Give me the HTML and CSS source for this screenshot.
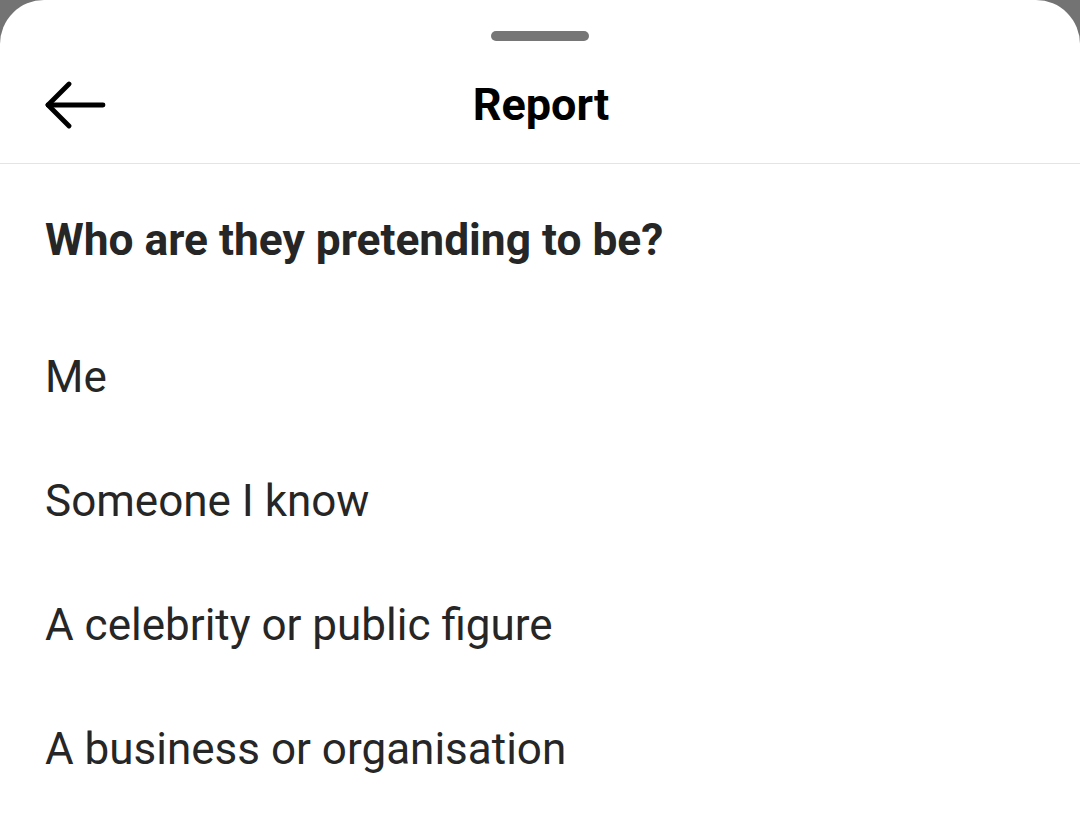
FILE: index.html
```html
<!DOCTYPE html>
<html lang="en">
<head>
<meta charset="utf-8">
<title>Report</title>
<link rel="stylesheet" href="styles.css">
</head>
<body>
<div class="sheet">
  <div class="handle"></div>
  <div class="header">
    <button class="back" aria-label="Back">
      <svg width="64" height="48" viewBox="0 0 64 48" fill="none" stroke="#000" stroke-width="4.8" stroke-linecap="round" stroke-linejoin="round">
        <path d="M4 24 H59"/>
        <path d="M25 3 L4 24 L25 45"/>
      </svg>
    </button>
    <h1 class="title">Report</h1>
  </div>
  <h2 class="question">Who are they pretending to be?</h2>
  <ul class="options">
    <li class="option">Me</li>
    <li class="option">Someone I know</li>
    <li class="option">A celebrity or public figure</li>
    <li class="option">A business or organisation</li>
  </ul>
</div>
</body>
</html>
```
FILE: styles.css
```css
html, body {
  margin: 0;
  padding: 0;
}
body {
  background: #737373;
  font-family: Roboto, "Noto Sans", "Liberation Sans", sans-serif;
  width: 1080px;
  height: 826px;
  overflow: hidden;
}
.sheet {
  background: #fff;
  border-radius: 44px 44px 0 0;
  height: 826px;
  padding-top: 31px;
  box-sizing: border-box;
}
.handle {
  width: 98px;
  height: 10px;
  border-radius: 5px;
  background: #767676;
  margin: 0 auto;
}
.header {
  position: relative;
  height: 116px;
  margin-top: 6px;
  display: flex;
  align-items: center;
  justify-content: center;
  border-bottom: 1.5px solid #e4e4e4;
}
.back {
  position: absolute;
  left: 44px;
  top: 34px;
  padding: 0;
  border: 0;
  background: none;
  display: flex;
}
.title {
  margin: 0 0 0 2px;
  font-size: 45px;
  font-weight: 700;
  color: #000;
  line-height: 54px;
}
.question {
  margin: 49px 0 48px;
  padding: 0 45px;
  font-size: 44.3px;
  font-weight: 700;
  color: #262626;
  line-height: 54px;
}
.options {
  list-style: none;
  margin: 0;
  padding: 0;
}
.option {
  padding: 35px 45px;
  font-size: 44px;
  line-height: 54px;
  color: #262626;
}
```
